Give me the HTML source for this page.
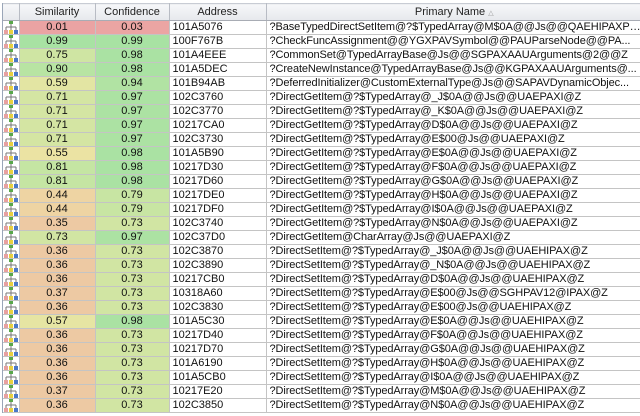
<!DOCTYPE html>
<html><head><meta charset="utf-8"><style>
*{margin:0;padding:0;box-sizing:border-box}
body{width:640px;height:416px;overflow:hidden;background:#fff;font-family:"Liberation Sans",sans-serif;font-size:11px;color:#111}
.wrap{position:absolute;left:2px;top:3px;border-left:1px solid #9aa6b8;}
table{border-collapse:collapse;table-layout:fixed;width:640px}
th{height:17px;background:linear-gradient(#f6f7f9,#e6e8ec);font-weight:normal;border-right:1px solid #b8bcc4;border-bottom:1px solid #a8acb4;border-top:1px solid #c8ccd4;color:#222;font-size:11px}
td{height:14px;border-right:1px solid #c4c4c4;border-bottom:1px solid #c4c4c4;white-space:nowrap;overflow:hidden;text-overflow:ellipsis;line-height:13px;padding:0}
td.n{text-align:center}
td.a{padding-left:3px}
td.p{padding-left:3px;letter-spacing:-0.1px}
td.i{padding:0}
.ic{display:block}
.tri{font-size:7px;color:#999}
</style></head><body><div class="wrap">
<table>
<colgroup><col style="width:16px"><col style="width:76px"><col style="width:74px"><col style="width:97px"><col></colgroup>
<tr><th></th><th>Similarity</th><th>Confidence</th><th>Address</th><th>Primary Name <span class="tri">&#9651;</span></th></tr>
<svg width="0" height="0" style="position:absolute"><defs><symbol id="ic" viewBox="0 0 15 13"><rect x="6" y="0" width="4" height="3" fill="#5aa84a"/><path d="M8 3v3M3 6h10M3 6v3M8 6v3M13 6v3" stroke="#777" stroke-width="1" fill="none"/><rect x="1" y="9" width="4" height="4" fill="#e8a0a0"/><rect x="6" y="9" width="4" height="4" fill="#e8d040"/><rect x="11" y="9" width="4" height="4" fill="#4a78c8"/></symbol></defs></svg>
<tr><td class="i"><svg class="ic" width="15" height="13"><use href="#ic"/></svg></td><td class="n" style="background:#eaa3a3">0.01</td><td class="n" style="background:#eba5a3">0.03</td><td class="a">101A5076</td><td class="p">?BaseTypedDirectSetItem@?$TypedArray@M$0A@@Js@@QAEHIPAXP6...</td></tr>
<tr><td class="i"><svg class="ic" width="15" height="13"><use href="#ic"/></svg></td><td class="n" style="background:#a8e2a3">0.99</td><td class="n" style="background:#a8e2a3">0.99</td><td class="a">100F767B</td><td class="p">?CheckFuncAssignment@@YGXPAVSymbol@@PAUParseNode@@PA...</td></tr>
<tr><td class="i"><svg class="ic" width="15" height="13"><use href="#ic"/></svg></td><td class="n" style="background:#cfe5a3">0.75</td><td class="n" style="background:#aae2a3">0.98</td><td class="a">101A4EEE</td><td class="p">?CommonSet@TypedArrayBase@Js@@SGPAXAAUArguments@2@@Z</td></tr>
<tr><td class="i"><svg class="ic" width="15" height="13"><use href="#ic"/></svg></td><td class="n" style="background:#b8e4a3">0.90</td><td class="n" style="background:#aae2a3">0.98</td><td class="a">101A5DEC</td><td class="p">?CreateNewInstance@TypedArrayBase@Js@@KGPAXAAUArguments@...</td></tr>
<tr><td class="i"><svg class="ic" width="15" height="13"><use href="#ic"/></svg></td><td class="n" style="background:#e3e5a3">0.59</td><td class="n" style="background:#b1e3a3">0.94</td><td class="a">101B94AB</td><td class="p">?DeferredInitializer@CustomExternalType@Js@@SAPAVDynamicObjec...</td></tr>
<tr><td class="i"><svg class="ic" width="15" height="13"><use href="#ic"/></svg></td><td class="n" style="background:#d4e5a3">0.71</td><td class="n" style="background:#ace2a3">0.97</td><td class="a">102C3760</td><td class="p">?DirectGetItem@?$TypedArray@_J$0A@@Js@@UAEPAXI@Z</td></tr>
<tr><td class="i"><svg class="ic" width="15" height="13"><use href="#ic"/></svg></td><td class="n" style="background:#d4e5a3">0.71</td><td class="n" style="background:#ace2a3">0.97</td><td class="a">102C3770</td><td class="p">?DirectGetItem@?$TypedArray@_K$0A@@Js@@UAEPAXI@Z</td></tr>
<tr><td class="i"><svg class="ic" width="15" height="13"><use href="#ic"/></svg></td><td class="n" style="background:#d4e5a3">0.71</td><td class="n" style="background:#ace2a3">0.97</td><td class="a">10217CA0</td><td class="p">?DirectGetItem@?$TypedArray@D$0A@@Js@@UAEPAXI@Z</td></tr>
<tr><td class="i"><svg class="ic" width="15" height="13"><use href="#ic"/></svg></td><td class="n" style="background:#d4e5a3">0.71</td><td class="n" style="background:#ace2a3">0.97</td><td class="a">102C3730</td><td class="p">?DirectGetItem@?$TypedArray@E$00@Js@@UAEPAXI@Z</td></tr>
<tr><td class="i"><svg class="ic" width="15" height="13"><use href="#ic"/></svg></td><td class="n" style="background:#ebe3a3">0.55</td><td class="n" style="background:#aae2a3">0.98</td><td class="a">101A5B90</td><td class="p">?DirectGetItem@?$TypedArray@E$0A@@Js@@UAEPAXI@Z</td></tr>
<tr><td class="i"><svg class="ic" width="15" height="13"><use href="#ic"/></svg></td><td class="n" style="background:#c5e5a3">0.81</td><td class="n" style="background:#aae2a3">0.98</td><td class="a">10217D30</td><td class="p">?DirectGetItem@?$TypedArray@F$0A@@Js@@UAEPAXI@Z</td></tr>
<tr><td class="i"><svg class="ic" width="15" height="13"><use href="#ic"/></svg></td><td class="n" style="background:#c5e5a3">0.81</td><td class="n" style="background:#aae2a3">0.98</td><td class="a">10217D60</td><td class="p">?DirectGetItem@?$TypedArray@G$0A@@Js@@UAEPAXI@Z</td></tr>
<tr><td class="i"><svg class="ic" width="15" height="13"><use href="#ic"/></svg></td><td class="n" style="background:#eed4a3">0.44</td><td class="n" style="background:#c8e5a3">0.79</td><td class="a">10217DE0</td><td class="p">?DirectGetItem@?$TypedArray@H$0A@@Js@@UAEPAXI@Z</td></tr>
<tr><td class="i"><svg class="ic" width="15" height="13"><use href="#ic"/></svg></td><td class="n" style="background:#eed4a3">0.44</td><td class="n" style="background:#c8e5a3">0.79</td><td class="a">10217DF0</td><td class="p">?DirectGetItem@?$TypedArray@I$0A@@Js@@UAEPAXI@Z</td></tr>
<tr><td class="i"><svg class="ic" width="15" height="13"><use href="#ic"/></svg></td><td class="n" style="background:#edc9a3">0.35</td><td class="n" style="background:#d1e5a3">0.73</td><td class="a">102C3740</td><td class="p">?DirectGetItem@?$TypedArray@N$0A@@Js@@UAEPAXI@Z</td></tr>
<tr><td class="i"><svg class="ic" width="15" height="13"><use href="#ic"/></svg></td><td class="n" style="background:#d1e5a3">0.73</td><td class="n" style="background:#ace2a3">0.97</td><td class="a">102C37D0</td><td class="p">?DirectGetItem@CharArray@Js@@UAEPAXI@Z</td></tr>
<tr><td class="i"><svg class="ic" width="15" height="13"><use href="#ic"/></svg></td><td class="n" style="background:#edc9a3">0.36</td><td class="n" style="background:#d1e5a3">0.73</td><td class="a">102C3870</td><td class="p">?DirectSetItem@?$TypedArray@_J$0A@@Js@@UAEHIPAX@Z</td></tr>
<tr><td class="i"><svg class="ic" width="15" height="13"><use href="#ic"/></svg></td><td class="n" style="background:#edc9a3">0.36</td><td class="n" style="background:#d1e5a3">0.73</td><td class="a">102C3890</td><td class="p">?DirectSetItem@?$TypedArray@_N$0A@@Js@@UAEHIPAX@Z</td></tr>
<tr><td class="i"><svg class="ic" width="15" height="13"><use href="#ic"/></svg></td><td class="n" style="background:#edc9a3">0.36</td><td class="n" style="background:#d1e5a3">0.73</td><td class="a">10217CB0</td><td class="p">?DirectSetItem@?$TypedArray@D$0A@@Js@@UAEHIPAX@Z</td></tr>
<tr><td class="i"><svg class="ic" width="15" height="13"><use href="#ic"/></svg></td><td class="n" style="background:#edc9a3">0.37</td><td class="n" style="background:#d1e5a3">0.73</td><td class="a">10318A60</td><td class="p">?DirectSetItem@?$TypedArray@E$00@Js@@SGHPAV12@IPAX@Z</td></tr>
<tr><td class="i"><svg class="ic" width="15" height="13"><use href="#ic"/></svg></td><td class="n" style="background:#edc9a3">0.36</td><td class="n" style="background:#d1e5a3">0.73</td><td class="a">102C3830</td><td class="p">?DirectSetItem@?$TypedArray@E$00@Js@@UAEHIPAX@Z</td></tr>
<tr><td class="i"><svg class="ic" width="15" height="13"><use href="#ic"/></svg></td><td class="n" style="background:#e6e5a3">0.57</td><td class="n" style="background:#aae2a3">0.98</td><td class="a">101A5C30</td><td class="p">?DirectSetItem@?$TypedArray@E$0A@@Js@@UAEHIPAX@Z</td></tr>
<tr><td class="i"><svg class="ic" width="15" height="13"><use href="#ic"/></svg></td><td class="n" style="background:#edc9a3">0.36</td><td class="n" style="background:#d1e5a3">0.73</td><td class="a">10217D40</td><td class="p">?DirectSetItem@?$TypedArray@F$0A@@Js@@UAEHIPAX@Z</td></tr>
<tr><td class="i"><svg class="ic" width="15" height="13"><use href="#ic"/></svg></td><td class="n" style="background:#edc9a3">0.36</td><td class="n" style="background:#d1e5a3">0.73</td><td class="a">10217D70</td><td class="p">?DirectSetItem@?$TypedArray@G$0A@@Js@@UAEHIPAX@Z</td></tr>
<tr><td class="i"><svg class="ic" width="15" height="13"><use href="#ic"/></svg></td><td class="n" style="background:#edc9a3">0.36</td><td class="n" style="background:#d1e5a3">0.73</td><td class="a">101A6190</td><td class="p">?DirectSetItem@?$TypedArray@H$0A@@Js@@UAEHIPAX@Z</td></tr>
<tr><td class="i"><svg class="ic" width="15" height="13"><use href="#ic"/></svg></td><td class="n" style="background:#edc9a3">0.36</td><td class="n" style="background:#d1e5a3">0.73</td><td class="a">101A5CB0</td><td class="p">?DirectSetItem@?$TypedArray@I$0A@@Js@@UAEHIPAX@Z</td></tr>
<tr><td class="i"><svg class="ic" width="15" height="13"><use href="#ic"/></svg></td><td class="n" style="background:#edc9a3">0.37</td><td class="n" style="background:#d1e5a3">0.73</td><td class="a">10217E20</td><td class="p">?DirectSetItem@?$TypedArray@M$0A@@Js@@UAEHIPAX@Z</td></tr>
<tr><td class="i"><svg class="ic" width="15" height="13"><use href="#ic"/></svg></td><td class="n" style="background:#edc9a3">0.36</td><td class="n" style="background:#d1e5a3">0.73</td><td class="a">102C3850</td><td class="p">?DirectSetItem@?$TypedArray@N$0A@@Js@@UAEHIPAX@Z</td></tr>
</table></div></body></html>
